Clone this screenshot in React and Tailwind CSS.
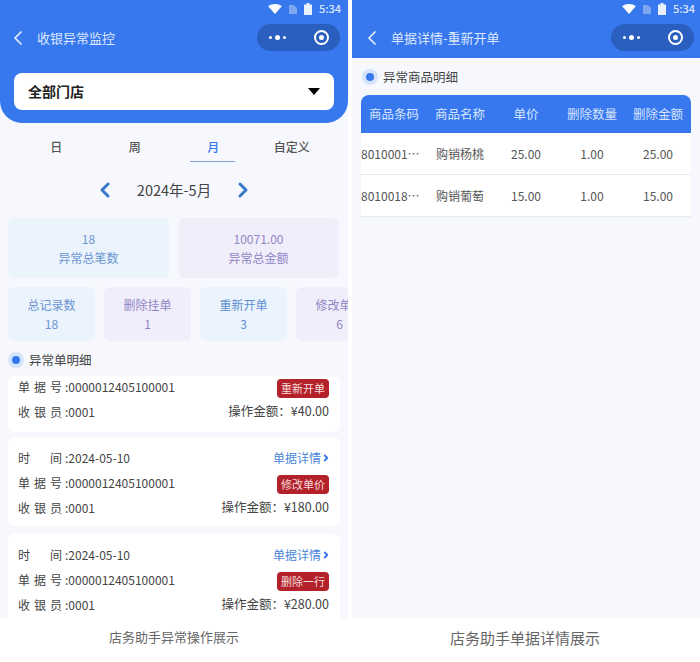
import { ChevronLeft, ChevronRight } from 'lucide-react';

const font = "font-['Noto_Sans_CJK_SC','Noto_Sans',sans-serif]";

function StatusBar({ pad }) {
  return (
    <div className={`flex items-center justify-end h-[16px] pt-[1px] gap-[7px] ${pad}`}>
      <svg width="14" height="10" viewBox="0 0 15 11"><path d="M0 2.500C4-.8 11-.8 15 2.500L7.500 11z" fill="#fff" /></svg>
      <svg width="8" height="10" viewBox="0 0 9 11"><path d="M0 1h5l4 3v7H0z" fill="#7fa6f0" /></svg>
      <svg width="8" height="12" viewBox="0 0 8 12"><path d="M2.500 0h3v1.500H7.500a.5.5 0 0 1 .5.5v9.500a.5.5 0 0 1-.5.5H.5a.5.5 0 0 1-.5-.5V2a.5.5 0 0 1 .5-.5h2z" fill="#e8f0ff" /></svg>
      <span className="text-[11px] leading-none text-[#dbe7ff] font-medium">5:34</span>
    </div>
  );
}

function Capsule() {
  return (
    <div className="flex items-center w-[83px] h-[27px] rounded-full bg-[#2a5fc0]">
      <div className="flex-1 flex justify-center items-center gap-[3px] pr-[4px]">
        <span className="w-[3px] h-[3px] rounded-full bg-white" />
        <span className="w-[5px] h-[5px] rounded-full bg-white" />
        <span className="w-[3px] h-[3px] rounded-full bg-white" />
      </div>
      <div className="w-[38px] flex justify-center">
        <div className="w-[15px] h-[15px] rounded-full border-[2px] border-white flex items-center justify-center">
          <span className="w-[5px] h-[5px] rounded-full bg-white" />
        </div>
      </div>
    </div>
  );
}

function NavBar({ title, pad }) {
  return (
    <div className={`flex items-center h-[27px] mt-[8px] ${pad}`}>
      <ChevronLeft className="w-[24px] h-[24px] text-[#e6eeff]" strokeWidth={1.7} />
      <span className="ml-[7px] text-[13px] text-[#dce8ff]">{title}</span>
      <div className="ml-auto"><Capsule /></div>
    </div>
  );
}

function SectionTitle({ text }) {
  return (
    <div className="flex items-center gap-[5px]">
      <span className="w-[16px] h-[16px] rounded-full bg-[#d5e3fb] flex items-center justify-center">
        <span className="w-[8px] h-[8px] rounded-full bg-[#3878ee]" />
      </span>
      <span className="text-[12.500px] leading-none text-[#444]">{text}</span>
    </div>
  );
}

function Row({ label, value, children }) {
  return (
    <div className="flex items-center justify-between h-[25px]">
      <span className="flex text-[12px] text-[#444]">
        <span className="w-[47px] pr-[3px] flex justify-between">{label.map((c) => <span key={c}>{c}</span>)}</span>
        <span>:{value}</span>
      </span>
      {children}
    </div>
  );
}

function Tag({ text }) {
  return <span className="w-[52px] h-[19px] translate-y-[2px] rounded-[4px] bg-[#b3212b] text-[#f6dcdc] text-[11px] leading-[19px] text-center">{text}</span>;
}

function Amount({ v }) {
  return <span className="text-[12.500px] text-[#444]">操作金额：{v}</span>;
}

function Detail() {
  return (
    <span className="flex items-center text-[12px] text-[#4a86d8] -mr-[2px]">
      单据详情
      <ChevronRight className="w-[10px] h-[10px] text-[#3878ee]" strokeWidth={4.500} />
    </span>
  );
}

function Bill({ tag, amount }) {
  return (
    <div className="bg-white rounded-[6px] pl-[10px] pr-[11px] pt-[8px] pb-[6px] mb-[8px]">
      <Row label={['时', '间']} value="2024-05-10"><Detail /></Row>
      <Row label={['单', '据', '号']} value="0000012405100001"><Tag text={tag} /></Row>
      <Row label={['收', '银', '员']} value="0001"><Amount v={amount} /></Row>
    </div>
  );
}

function LeftPhone() {
  const stat = 'rounded-[6px] text-center text-[12px] leading-[19px]';
  return (
    <div className="w-[348px] h-[618px] overflow-hidden bg-[#f6f8fd] shrink-0">
      <div className="h-[123px] bg-[#3878ee] rounded-b-[22px]">
        <StatusBar pad="pr-[7px]" />
        <NavBar title="收银异常监控" pad="pl-[6px] pr-[8px]" />
        <div className="mx-[14px] mt-[22px] h-[37px] bg-white rounded-[8px] flex items-center justify-between pl-[14px] pr-[14px]">
          <span className="text-[14px] font-bold text-[#222]">全部门店</span>
          <span className="w-0 h-0 border-x-[6px] border-x-transparent border-t-[7px] border-t-black" />
        </div>
      </div>
      <div className="grid grid-cols-4 h-[39px] px-[17px] text-[12px] text-[#555] font-medium">
        <div className="flex items-center justify-center pt-[8px]">日</div>
        <div className="flex items-center justify-center pt-[8px]">周</div>
        <div className="flex items-center justify-center pt-[8px] text-[#3878ee] relative">
          月
          <span className="absolute bottom-0 left-[16px] w-[45px] h-[1px] bg-[#7fa3d8]" />
        </div>
        <div className="flex items-center justify-center pt-[8px]">自定义</div>
      </div>
      <div className="flex items-center justify-center h-[56px] gap-[19px]">
        <ChevronLeft className="w-[24px] h-[24px] text-[#3878c8]" strokeWidth={3} />
        <span className="w-[76px] text-center text-[14.500px] text-[#444] whitespace-nowrap">2024年-5月</span>
        <ChevronRight className="w-[24px] h-[24px] text-[#3878c8]" strokeWidth={3} />
      </div>
      <div className="flex gap-[9px] pl-[8px] pr-[9px]">
        <div className={`${stat} flex-1 h-[60px] pt-[11px] bg-[#ebf3fd] text-[#6a95d0]`}><div>18</div><div>异常总笔数</div></div>
        <div className={`${stat} flex-1 h-[60px] pt-[11px] bg-[#f1eefb] text-[#8f86c4]`}><div>10071.00</div><div>异常总金额</div></div>
      </div>
      <div className="flex gap-[9px] pl-[8px] mt-[9px] w-[420px]">
        <div className={`${stat} w-[87px] h-[54px] pt-[8px] bg-[#ebf3fd] text-[#6a95d0]`}><div>总记录数</div><div>18</div></div>
        <div className={`${stat} w-[87px] h-[54px] pt-[8px] bg-[#f1eefb] text-[#8f86c4]`}><div>删除挂单</div><div>1</div></div>
        <div className={`${stat} w-[87px] h-[54px] pt-[8px] bg-[#ebf3fd] text-[#5d8fcf]`}><div>重新开单</div><div>3</div></div>
        <div className={`${stat} w-[87px] h-[54px] pt-[8px] bg-[#f1eefb] text-[#8f86c4]`}><div>修改单价</div><div>6</div></div>
      </div>
      <div className="pl-[8px] mt-[11px] h-[24px]"><SectionTitle text="异常单明细" /></div>
      <div className="px-[8px]">
        <div className="bg-white rounded-[6px] pl-[10px] pr-[11px] pb-[6px] mb-[5px] h-[56px]">
          <div className="-translate-y-[2px]">
            <Row label={['单', '据', '号']} value="0000012405100001"><Tag text="重新开单" /></Row>
            <Row label={['收', '银', '员']} value="0001"><Amount v="¥40.00" /></Row>
          </div>
        </div>
        <Bill tag="修改单价" amount="¥180.00" />
        <Bill tag="删除一行" amount="¥280.00" />
      </div>
    </div>
  );
}

function RightPhone() {
  const cols = 'grid grid-cols-[66px_66px_66px_66px_66px] items-center text-center';
  return (
    <div className="w-[348px] h-[618px] overflow-hidden bg-[#f6f8fd] shrink-0">
      <div className="h-[58px] bg-[#3878ee]">
        <StatusBar pad="pr-[5px]" />
        <NavBar title="单据详情-重新开单" pad="pl-[8px] pr-[6px]" />
      </div>
      <div className="pl-[10px] mt-[11px]"><SectionTitle text="异常商品明细" /></div>
      <div className="ml-[9px] mr-[9px] mt-[10px]">
        <div className={`${cols} h-[38px] bg-[#3878ee] rounded-t-[8px] text-[12.500px] text-[#d6e4ff]`}>
          <span>商品条码</span><span>商品名称</span><span>单价</span><span>删除数量</span><span>删除金额</span>
        </div>
        {[['8010001…', '购销杨桃', '25.00'], ['8010018…', '购销葡萄', '15.00']].map((r) => (
          <div key={r[0]} className={`${cols} h-[42px] bg-white border-b border-[#e6e9f0] text-[12px] text-[#555]`}>
            <span className="text-left">{r[0]}</span><span>{r[1]}</span><span>{r[2]}</span><span>1.00</span><span>{r[2]}</span>
          </div>
        ))}
      </div>
    </div>
  );
}

export default function App() {
  return (
    <div className={`w-[700px] h-[662px] bg-white overflow-hidden ${font}`}>
      <div className="flex justify-between">
        <LeftPhone />
        <RightPhone />
      </div>
      <div className="flex items-start mt-[9px] text-[#666] text-center">
        <div className="w-[348px] text-[13px]">店务助手异常操作展示</div>
        <div className="w-[352px] pl-[2px] text-[15px]">店务助手单据详情展示</div>
      </div>
    </div>
  );
}
